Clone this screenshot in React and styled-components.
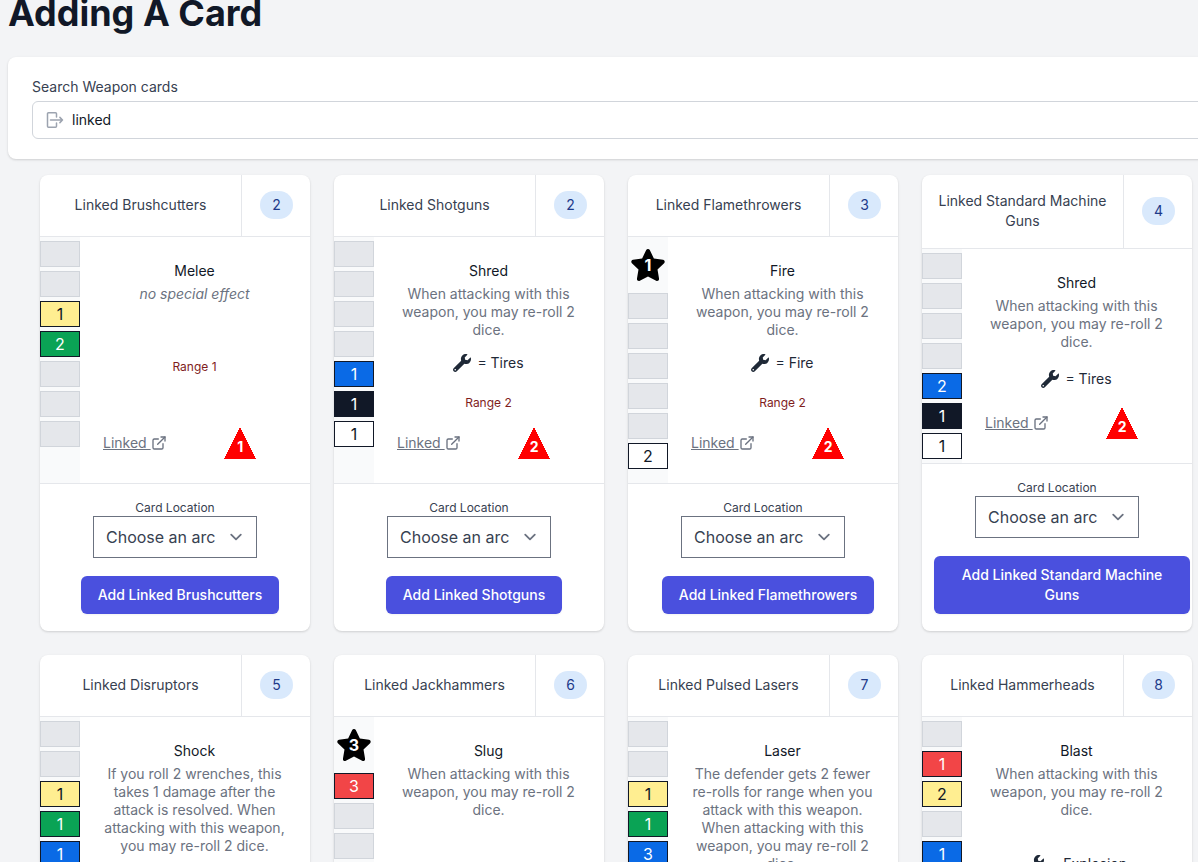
import React, { useState } from 'react'
import styled, { createGlobalStyle, css } from 'styled-components'
import { FaStar, FaWrench } from 'react-icons/fa'
import { FiExternalLink } from 'react-icons/fi'

const GlobalStyle = createGlobalStyle`
  *, *::before, *::after {
    box-sizing: border-box;
  }

  body {
    margin: 0;
    background: #f3f4f6;
    color: #111827;
    font-family: Inter, 'Liberation Sans', sans-serif;
    font-size: 14px;
    line-height: 20px;
    overflow-x: hidden;
  }

  h1, h2, h3, p {
    margin: 0;
    font-weight: 400;
  }

  button, input, select {
    font-family: inherit;
  }
`

const Page = styled.main`
  padding-left: 8px;
  overflow: hidden;
`

const Title = styled.h1`
  margin-top: -7px;
  font-size: 36px;
  font-weight: 700;
  line-height: 40px;
`

const SearchPanel = styled.section`
  margin: 24px -32px 16px 0;
  padding: 20px 24px;
  background: #fff;
  border-radius: 8px;
  box-shadow: 0 1px 3px rgba(0, 0, 0, 0.1), 0 1px 2px rgba(0, 0, 0, 0.06);
`

const SearchLabel = styled.label`
  display: block;
  color: #374151;
`

const SearchBox = styled.div`
  display: flex;
  align-items: center;
  gap: 7px;
  height: 38px;
  margin-top: 4px;
  padding: 0 12px;
  border: 1px solid #d1d5db;
  border-radius: 6px;
  color: #9ca3af;
`

const SearchInput = styled.input`
  flex: 1;
  padding: 0;
  border: 0;
  outline: 0;
  background: none;
  color: #111827;
  font-size: 14px;
  line-height: 20px;
`

const CardGrid = styled.ul`
  display: grid;
  grid-template-columns: repeat(auto-fill, minmax(270px, 1fr));
  gap: 24px;
  margin: 0;
  padding: 0 6px 24px 32px;
  list-style: none;
`

const Card = styled.li`
  display: flex;
  flex-direction: column;
  background: #fff;
  border-radius: 8px;
  box-shadow: 0 1px 3px rgba(0, 0, 0, 0.1), 0 1px 2px rgba(0, 0, 0, 0.06);
`

const CardHeader = styled.div`
  display: flex;
  border-bottom: 1px solid #e5e7eb;
`

const CardName = styled.h2`
  display: flex;
  flex: 1;
  align-items: center;
  justify-content: center;
  padding: 16px 12px 17px;
  color: #374151;
  font-size: 14px;
  text-align: center;
`

const CardCost = styled.div`
  display: flex;
  align-items: center;
  padding: 16px 17px 17px 18px;
  border-left: 1px solid #e5e7eb;
`

const CostBadge = styled.span`
  min-width: 33px;
  padding: 4px 12px;
  border-radius: 14px;
  background: #d9e9fc;
  color: #1e3a8a;
  text-align: center;
`

const CardBody = styled.div`
  display: flex;
  flex: 1;
  border-bottom: 1px solid #e5e7eb;
`

const DiceTrack = styled.div`
  display: flex;
  flex-direction: column;
  gap: 4px;
  width: 40px;
  padding: 4px 0;
  background: #f9fafb;
`

const colors = {
  yellow: ['#ffee91', '#111827'],
  green: ['#0aa355', '#fff'],
  blue: ['#0a6ae6', '#fff'],
  black: ['#111827', '#fff'],
  white: ['#fff', '#111827'],
  red: ['#f24547', '#fff'],
}

const Die = styled.div`
  height: 26px;
  border: 1px solid #d1d5db;
  background: #e5e7eb;
  font-size: 16px;
  line-height: 24px;
  text-align: center;

  ${({ $color }) => $color && css`
    border-color: #111827;
    background: ${colors[$color][0]};
    color: ${colors[$color][1]};
  `}
`

const StarBox = styled.div`
  display: grid;
  place-items: center;
  height: 48px;
  color: #000;

  > * {
    grid-area: 1 / 1;
  }
`

const StarCount = styled.span`
  color: #fff;
  font-size: 16px;
  font-weight: 700;
`

const Details = styled.div`
  display: flex;
  flex: 1;
  flex-direction: column;
  justify-content: space-between;
  gap: 4px;
  padding: 24px 24px 24px 23px;
  text-align: center;
`

const EffectName = styled.h3`
  margin-bottom: 4px;
  font-size: 14px;
`

const EffectText = styled.p`
  color: #6b7280;
  line-height: 18px;
  font-style: ${({ $none }) => ($none ? 'italic' : 'normal')};
`

const WrenchRow = styled.p`
  display: flex;
  align-items: center;
  justify-content: center;
  gap: 6px;
  height: 24px;
  color: #1f2937;
`

const Range = styled.p`
  padding-top: 4px;
  color: #7f1d1d;
  font-size: 12px;
  line-height: 24px;
`

const DetailsFooter = styled.div`
  display: grid;
  grid-template-columns: 1fr 1fr;
  align-items: center;
`

const KeywordLink = styled.a`
  display: flex;
  align-items: center;
  color: #6b7280;
  text-decoration: none;

  span {
    text-decoration: underline;
    white-space: pre;
  }
`

const Triangle = styled.span`
  display: grid;
  justify-self: center;
  width: 32px;
  height: 32px;
  color: #f00;

  > * {
    grid-area: 1 / 1;
  }
`

const TriangleCount = styled.span`
  align-self: end;
  padding-bottom: 2px;
  color: #fff;
  font-weight: 700;
`

const CardFooter = styled.div`
  display: flex;
  flex-direction: column;
  align-items: center;
  padding: 16px 2px 17px;
`

const LocationLabel = styled.label`
  color: #374151;
  font-size: 12px;
  line-height: 16px;
`

const SelectWrap = styled.div`
  position: relative;
  margin-bottom: 18px;

  svg {
    position: absolute;
    top: 9px;
    right: 9px;
    pointer-events: none;
  }
`

const Select = styled.select`
  display: block;
  height: 42px;
  padding: 8px 40px 8px 12px;
  border: 1px solid #6b7280;
  border-radius: 0;
  background: #fff;
  color: #374151;
  font-size: 16px;
  line-height: 24px;
  appearance: none;
`

const AddButton = styled.button`
  margin-left: 10px;
  padding: 9px 17px;
  border: 0;
  border-radius: 6px;
  background: #4a50de;
  box-shadow: 0 1px 2px rgba(0, 0, 0, 0.05);
  color: #fff;
  font-size: 14px;
  font-weight: 500;
  line-height: 20px;
`

const reroll = 'When attacking with this weapon, you may re-roll 2 dice.'

// dice run from the top slot of the track to the bottom, null is an empty slot
const weapons = [
  {
    name: 'Linked Brushcutters',
    cost: 2,
    dice: [null, null, ['yellow', 1], ['green', 2], null, null, null],
    effect: 'Melee',
    range: 1,
    attack: 1,
  },
  {
    name: 'Linked Shotguns',
    cost: 2,
    dice: [null, null, null, null, ['blue', 1], ['black', 1], ['white', 1]],
    effect: 'Shred',
    text: reroll,
    wrench: 'Tires',
    range: 2,
    attack: 2,
  },
  {
    name: 'Linked Flamethrowers',
    cost: 3,
    star: 1,
    dice: [null, null, null, null, null, ['white', 2]],
    effect: 'Fire',
    text: reroll,
    wrench: 'Fire',
    range: 2,
    attack: 2,
  },
  {
    name: 'Linked Standard Machine Guns',
    cost: 4,
    dice: [null, null, null, null, ['blue', 2], ['black', 1], ['white', 1]],
    effect: 'Shred',
    text: reroll,
    wrench: 'Tires',
    attack: 2,
  },
  {
    name: 'Linked Disruptors',
    cost: 5,
    dice: [null, null, ['yellow', 1], ['green', 1], ['blue', 1], null, null],
    effect: 'Shock',
    text: 'If you roll 2 wrenches, this takes 1 damage after the attack is resolved. When attacking with this weapon, you may re-roll 2 dice.',
    attack: 2,
  },
  {
    name: 'Linked Jackhammers',
    cost: 6,
    star: 3,
    dice: [['red', 3], null, null, null, null, null],
    effect: 'Slug',
    text: reroll,
    attack: 2,
  },
  {
    name: 'Linked Pulsed Lasers',
    cost: 7,
    dice: [null, null, ['yellow', 1], ['green', 1], ['blue', 3], null, null],
    effect: 'Laser',
    text: 'The defender gets 2 fewer re-rolls for range when you attack with this weapon. When attacking with this weapon, you may re-roll 2 dice.',
    range: 3,
    attack: 2,
  },
  {
    name: 'Linked Hammerheads',
    cost: 8,
    dice: [null, ['red', 1], ['yellow', 2], null, ['blue', 1], null, null],
    effect: 'Blast',
    text: reroll,
    wrench: 'Explosion',
    attack: 2,
  },
]

const LeaveIcon = () => (
  <svg width="20" height="20" viewBox="0 0 20 20" fill="none" stroke="currentColor" strokeWidth="1.5" strokeLinecap="round" strokeLinejoin="round">
    <path d="M11.5 7V3.8a1 1 0 0 0-1-1H3.5a1 1 0 0 0-1 1v12.4a1 1 0 0 0 1 1h7a1 1 0 0 0 1-1V13" />
    <path d="M5.5 10h12M14.9 7.4l2.6 2.6-2.6 2.6" />
  </svg>
)

const WeaponCard = ({ weapon }) => {
  const selectId = `location-${weapon.cost}-${weapon.effect}`

  return (
    <Card>
      <CardHeader>
        <CardName>{weapon.name}</CardName>
        <CardCost>
          <CostBadge>{weapon.cost}</CostBadge>
        </CardCost>
      </CardHeader>
      <CardBody>
        <DiceTrack>
          {weapon.star && (
            <StarBox>
              <FaStar size={36} />
              <StarCount>{weapon.star}</StarCount>
            </StarBox>
          )}
          {weapon.dice.map((die, i) => (
            <Die key={i} $color={die && die[0]}>{die && die[1]}</Die>
          ))}
        </DiceTrack>
        <Details>
          <div>
            <EffectName>{weapon.effect}</EffectName>
            <EffectText $none={!weapon.text}>{weapon.text || 'no special effect'}</EffectText>
          </div>
          {weapon.wrench && (
            <WrenchRow>
              <FaWrench size={18} />
              <span>= {weapon.wrench}</span>
            </WrenchRow>
          )}
          {weapon.range && <Range>Range {weapon.range}</Range>}
          <DetailsFooter>
            <KeywordLink href="#linked">
              <span>{'Linked '}</span>
              <FiExternalLink size={16} />
            </KeywordLink>
            <Triangle>
              <svg width="32" height="32" shapeRendering="crispEdges" fill="currentColor">
                <path d="M16 0 32 32H0z" />
              </svg>
              <TriangleCount>{weapon.attack}</TriangleCount>
            </Triangle>
          </DetailsFooter>
        </Details>
      </CardBody>
      <CardFooter>
        <LocationLabel htmlFor={selectId}>Card Location</LocationLabel>
        <SelectWrap>
          <Select id={selectId} defaultValue="">
            <option value="">Choose an arc</option>
            <option value="front">Front</option>
            <option value="left">Left</option>
            <option value="right">Right</option>
            <option value="back">Back</option>
          </Select>
          <svg width="24" height="24" viewBox="0 0 20 20" fill="none" stroke="#6b7280" strokeWidth="1.5" strokeLinecap="round" strokeLinejoin="round">
            <path d="M6 8l4 4 4-4" />
          </svg>
        </SelectWrap>
        <AddButton type="button">Add {weapon.name}</AddButton>
      </CardFooter>
    </Card>
  )
}

const App = () => {
  const [search, setSearch] = useState('linked')
  const found = weapons.filter(({ name }) => name.toLowerCase().includes(search.toLowerCase()))

  return (
    <Page>
      <GlobalStyle />
      <Title>Adding A Card</Title>
      <SearchPanel>
        <SearchLabel htmlFor="search">Search Weapon cards</SearchLabel>
        <SearchBox>
          <LeaveIcon />
          <SearchInput id="search" type="text" value={search} onChange={(e) => setSearch(e.target.value)} />
        </SearchBox>
      </SearchPanel>
      <CardGrid>
        {found.map((weapon) => (
          <WeaponCard key={weapon.name} weapon={weapon} />
        ))}
      </CardGrid>
    </Page>
  )
}

export default App
